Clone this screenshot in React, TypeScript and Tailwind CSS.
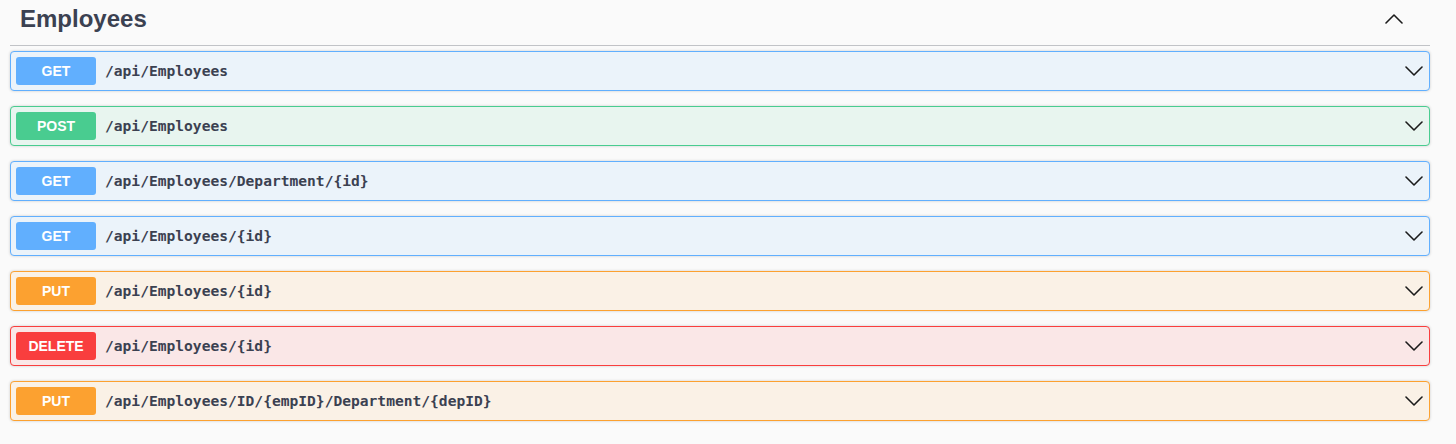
const ops = [
  { method: 'GET', path: '/api/Employees' },
  { method: 'POST', path: '/api/Employees' },
  { method: 'GET', path: '/api/Employees/Department/{id}' },
  { method: 'GET', path: '/api/Employees/{id}' },
  { method: 'PUT', path: '/api/Employees/{id}' },
  { method: 'DELETE', path: '/api/Employees/{id}' },
  { method: 'PUT', path: '/api/Employees/ID/{empID}/Department/{depID}' },
];

const styles: Record<string, { block: string; badge: string }> = {
  GET: { block: 'border-[#61affe] bg-[#ebf3fa]', badge: 'bg-[#61affe]' },
  POST: { block: 'border-[#49cc90] bg-[#e8f5ef]', badge: 'bg-[#49cc90]' },
  PUT: { block: 'border-[#fca130] bg-[#faf1e6]', badge: 'bg-[#fca130]' },
  DELETE: { block: 'border-[#f93e3e] bg-[#fae7e7]', badge: 'bg-[#f93e3e]' },
};

function Chevron({ up }: { up?: boolean }) {
  return (
    <svg width="18" height="10" viewBox="0 0 18 10" fill="none" className="shrink-0">
      <path
        d={up ? 'M1 9l8-8 8 8' : 'M1 1l8 8 8-8'}
        stroke="#1b1b1b"
        strokeWidth="1.6"
        strokeLinecap="round"
        strokeLinejoin="round"
      />
    </svg>
  );
}

export default function App() {
  return (
    <div className="min-h-[444px] w-full bg-[#fafafa] font-['Liberation_Sans',Arial,sans-serif]">
      <div className="ml-[10px] w-[1420px]">
        <div className="flex h-[46px] justify-between border-b border-[#c1c3c7]">
          <h3 className="pl-[10px] pt-[5px] text-[24px] font-bold leading-[28px] text-[#3b4151]">Employees</h3>
          <div className="mr-[27px] mt-[14px]">
            <Chevron up />
          </div>
        </div>
        <div className="mt-[5px] flex flex-col gap-[15px]">
          {ops.map((op, i) => (
            <div
              key={i}
              className={`flex h-[40px] items-center rounded-[4px] border p-[5px] shadow-[0_0_3px_rgba(0,0,0,0.19)] ${styles[op.method].block}`}
            >
              <span
                className={`flex h-[28px] w-[80px] shrink-0 items-center justify-center rounded-[3px] text-[14px] font-bold text-white ${styles[op.method].badge}`}
              >
                {op.method}
              </span>
              <span className="ml-[9px] flex-1 font-['DejaVu_Sans_Mono',monospace] text-[14.6px] font-bold text-[#3b4151]">
                {op.path}
              </span>
              <div className="mr-[1px]">
                <Chevron />
              </div>
            </div>
          ))}
        </div>
      </div>
    </div>
  );
}
